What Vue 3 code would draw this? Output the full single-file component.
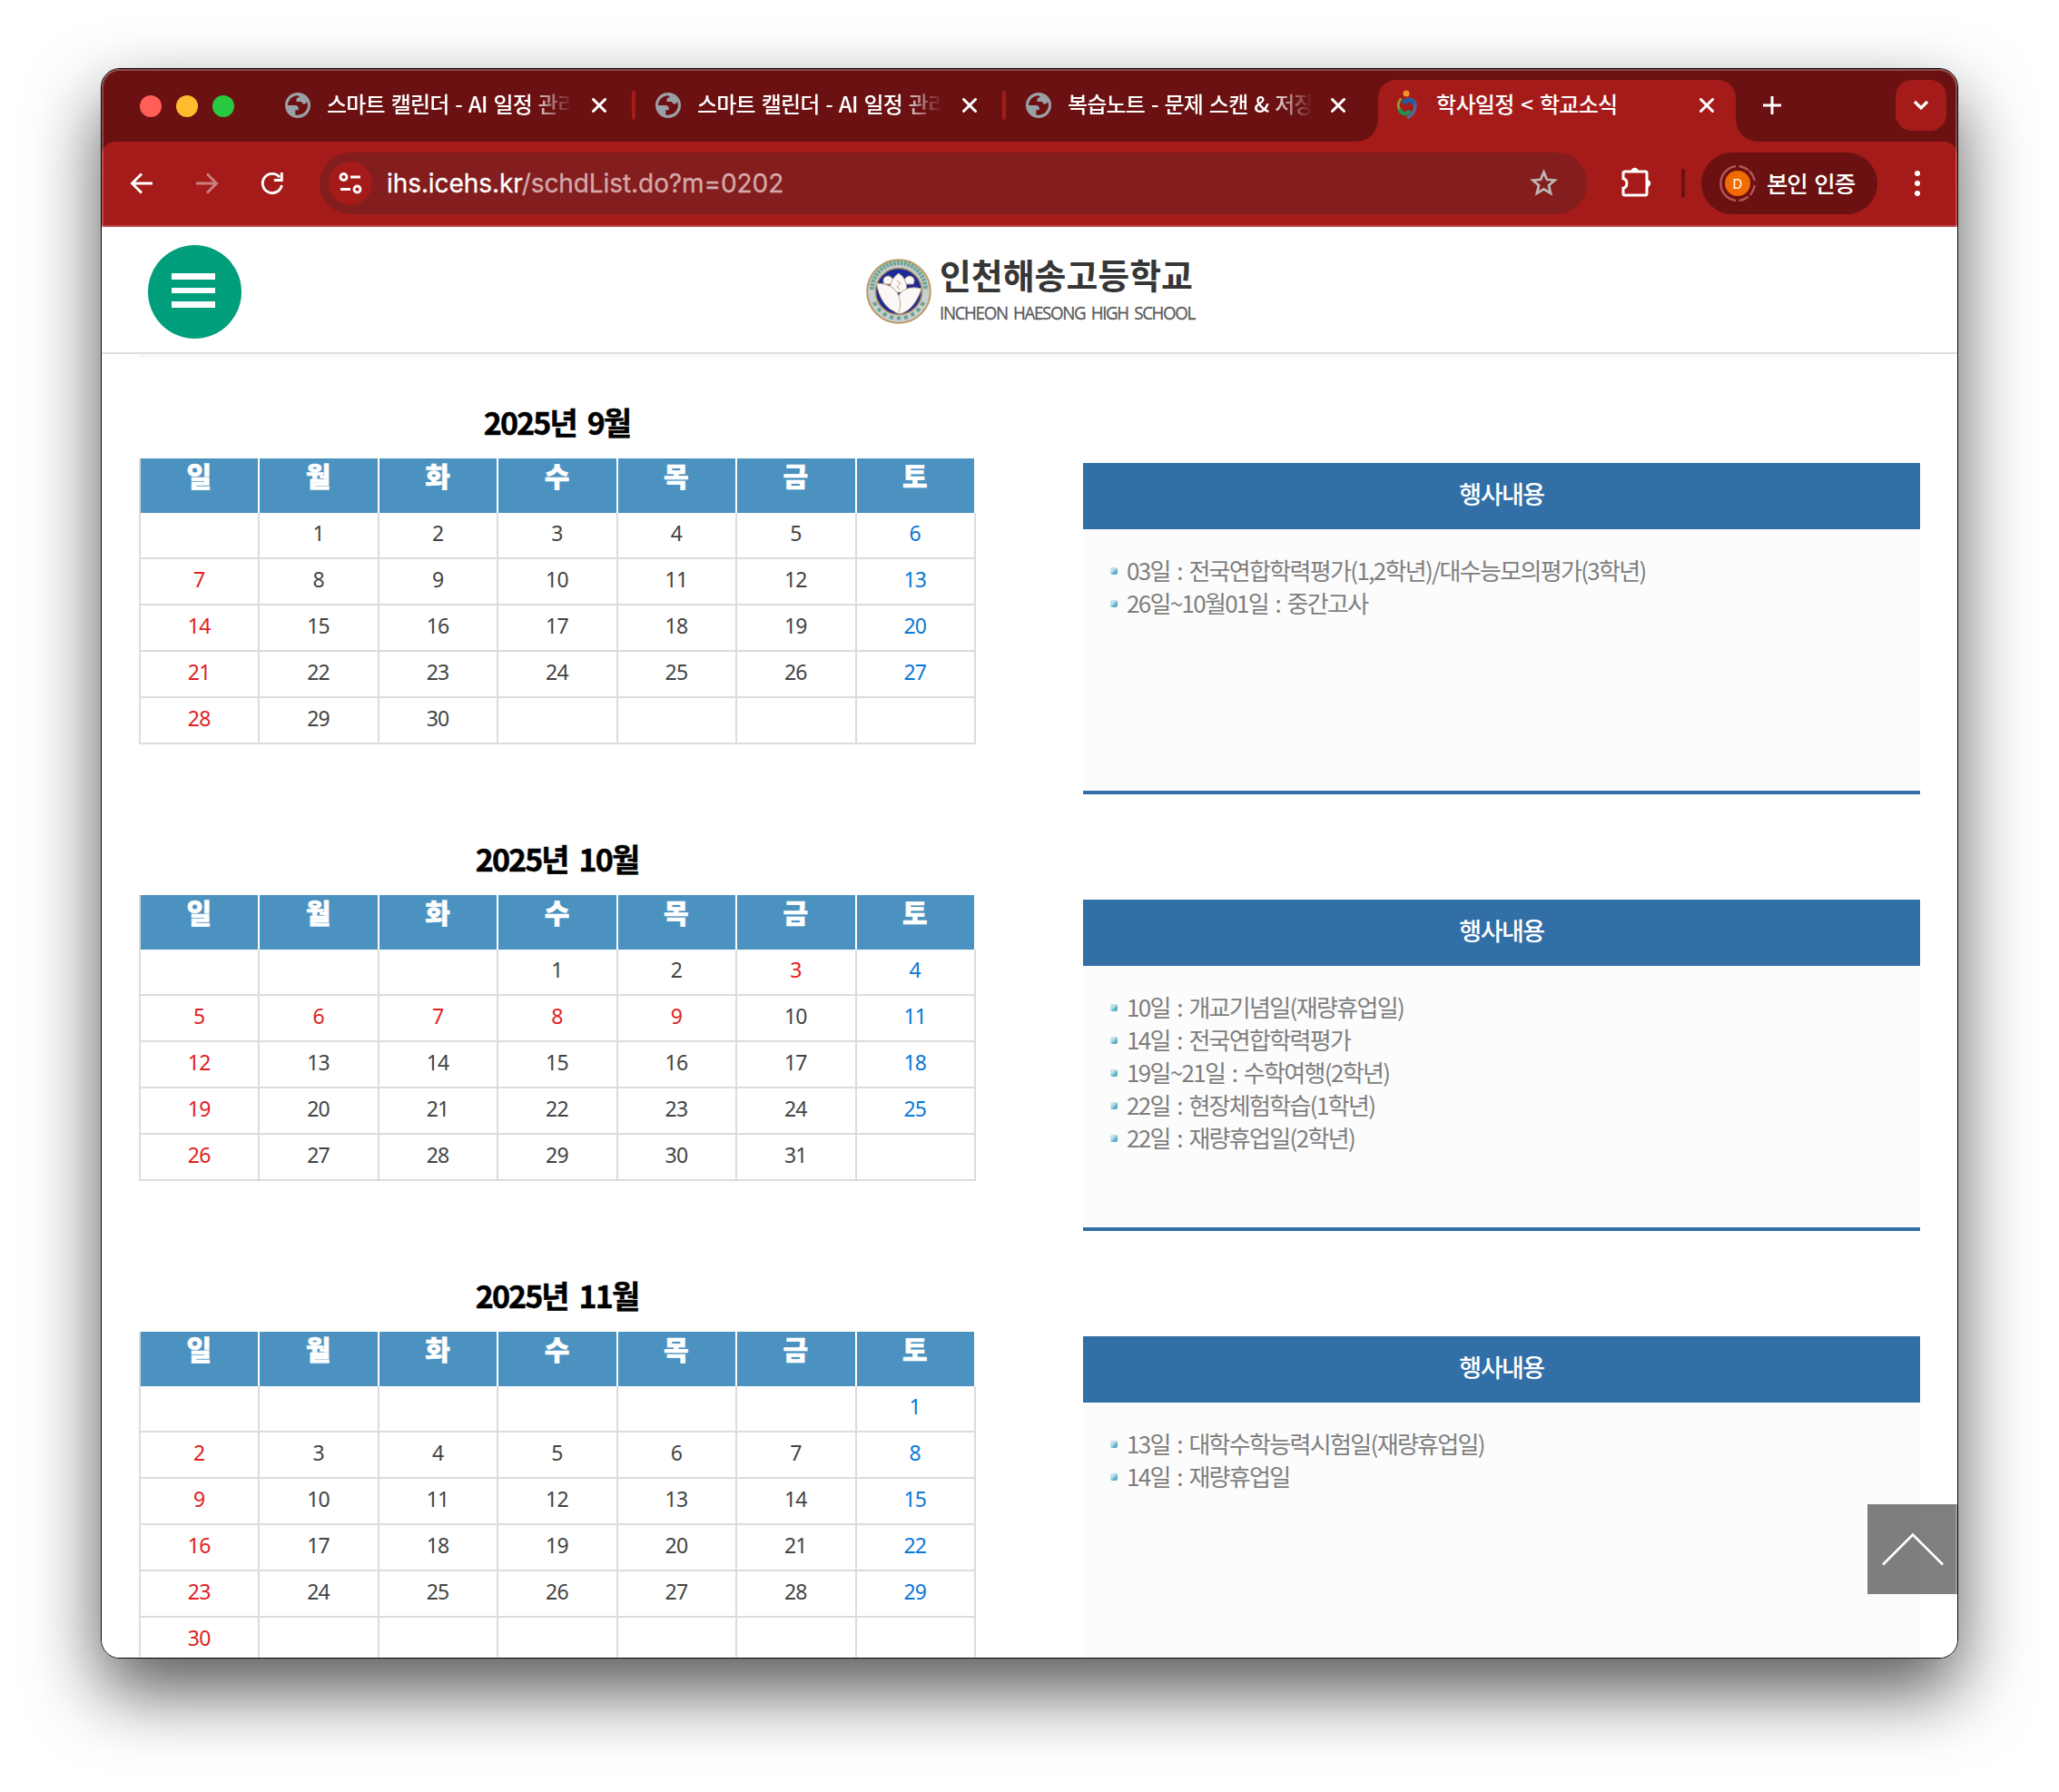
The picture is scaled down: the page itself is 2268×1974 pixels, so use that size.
<script setup>
const tabs = [
  { title: '스마트 캘린더 - AI 일정 관리' },
  { title: '스마트 캘린더 - AI 일정 관리' },
  { title: '복습노트 - 문제 스캔 & 저장' }
]

const dayNames = ['일', '월', '화', '수', '목', '금', '토']

function buildWeeks(firstDay, count, holidays = []) {
  const weeks = []
  const total = Math.ceil((firstDay + count) / 7)
  for (let w = 0; w < total; w++) {
    const row = []
    for (let d = 0; d < 7; d++) {
      const n = w * 7 + d - firstDay + 1
      const valid = n >= 1 && n <= count
      row.push({
        label: valid ? n : '',
        red: d === 0 || holidays.includes(n),
        blue: d === 6
      })
    }
    weeks.push(row)
  }
  return weeks
}

const months = [
  {
    title: '2025년 9월',
    weeks: buildWeeks(1, 30),
    events: ['03일 : 전국연합학력평가(1,2학년)/대수능모의평가(3학년)', '26일~10월01일 : 중간고사']
  },
  {
    title: '2025년 10월',
    weeks: buildWeeks(3, 31, [3, 6, 7, 8, 9]),
    events: [
      '10일 : 개교기념일(재량휴업일)',
      '14일 : 전국연합학력평가',
      '19일~21일 : 수학여행(2학년)',
      '22일 : 현장체험학습(1학년)',
      '22일 : 재량휴업일(2학년)'
    ]
  },
  {
    title: '2025년 11월',
    weeks: buildWeeks(6, 30),
    events: ['13일 : 대학수학능력시험일(재량휴업일)', '14일 : 재량휴업일']
  }
]
</script>

<template>
  <div class="desktop">
    <div class="window">
      <div class="tabstrip">
        <div class="lights"><i class="r"></i><i class="y"></i><i class="g"></i></div>
        <div v-for="(t, i) in tabs" :key="i" class="tab">
          <svg class="globe" viewBox="0 0 28 28">
            <circle cx="14" cy="14" r="14" fill="#9aa0a6" />
            <path d="M14 3.2C7.6 3.4 3 8.200 3 14h8.200c2.200 0 3.600 1.300 3.600 3.300v1.900h-3.500v5.200c6.800 1.500 13.600-3.400 13.600-10.400 0-1.500-.3-2.700-.8-3.900-.8 1.700-1.800 2.700-3.200 2.700-2.300 0-2.200-2.700-4-2.700h-4.300c-.6-3 .2-5 3.500-5.200z" fill="#6b1112" />
          </svg>
          <span class="tab-title fade">{{ t.title }}</span>
          <svg class="close" viewBox="0 0 16 16"><path d="M1.500 1.500l13 13M14.500 1.500l-13 13" /></svg>
          <b v-if="i < 2" class="sep"></b>
        </div>
        <div class="tab active">
          <svg class="favicon" viewBox="0 0 26 34">
            <circle cx="11" cy="4" r="3.500" fill="#f0922c" />
            <path d="M5.500 9.500C2 13 1.500 18 3.500 22" fill="none" stroke="#8f9d24" stroke-width="3" />
            <path d="M3.500 21c1.500 5.500 8 7 11.500 2" fill="none" stroke="#1f9150" stroke-width="4.500" />
            <path d="M8 13c5-4.500 13-3 13 4.500 0 6-3.500 10-9 13.500" fill="none" stroke="#5a6593" stroke-width="3.600" />
            <path d="M7.500 15c4-5 10-4.500 12 1" fill="none" stroke="#1b5fa8" stroke-width="4.500" />
          </svg>
          <span class="tab-title">학사일정 &lt; 학교소식</span>
          <svg class="close" viewBox="0 0 16 16"><path d="M1.500 1.500l13 13M14.500 1.500l-13 13" /></svg>
        </div>
        <svg class="plus" viewBox="0 0 20 20"><path d="M10 0v20M0 10h20" stroke="#fff" stroke-width="3" /></svg>
        <div class="tab-menu">
          <svg width="18" height="12" viewBox="0 0 18 12"><path d="M2 2l7 7 7-7" fill="none" stroke="#fff" stroke-width="3.200" /></svg>
        </div>
      </div>

      <div class="toolbar">
        <svg class="tool" viewBox="0 0 28 28"><path d="M26 14H4M14 3.500L3.500 14 14 24.500" /></svg>
        <svg class="tool dim" viewBox="0 0 28 28"><path d="M2 14h22M14 3.500L24.500 14 14 24.500" /></svg>
        <svg class="tool" viewBox="0 0 28 28"><path d="M24.300 16A10.600 10.600 0 1 1 22 7.200M24.300 2v8.500h-8.500" /></svg>
        <div class="omnibox">
          <div class="site">
            <svg width="26" height="24" viewBox="0 0 26 24" fill="none" stroke="#fff" stroke-width="2.800">
              <circle cx="5.500" cy="5" r="3.500" /><path d="M13 5h11M2 18.500h11" /><circle cx="20.500" cy="18.500" r="3.500" />
            </svg>
          </div>
          <span class="url">ihs.icehs.kr<em>/schdList.do?m=0202</em></span>
          <svg class="star" viewBox="0 0 30 30"><path d="M15 3.500l3.300 7.900 8.500.7-6.500 5.600 2 8.300-7.300-4.400L7.700 26l2-8.300-6.500-5.600 8.500-.7z" fill="none" stroke="#bdb5b5" stroke-width="2.700" /></svg>
        </div>
        <svg class="puzzle" viewBox="0 0 34 34">
          <path d="M4.500 6h23a1.500 1.500 0 0 1 1.500 1.500v23a1.500 1.500 0 0 1-1.500 1.500h-23a1.500 1.500 0 0 1-1.500-1.500v-6.300c5.200-1 5.200-9.400 0-10.400V7.500A1.500 1.500 0 0 1 4.500 6z" fill="none" stroke="#fff" stroke-width="3" />
          <path d="M11.500 6a4.200 4.200 0 0 1 8.400 0zM29 14.800a4.200 4.200 0 0 1 0 8.400z" fill="#fff" />
        </svg>
        <b class="bar"></b>
        <div class="profile">
          <svg width="40" height="42" viewBox="0 0 40 42">
            <circle cx="20" cy="21" r="14" fill="#f26b00" />
            <path d="M17 2.300A19 19 0 0 0 17 39.700" class="ring" />
            <path d="M22.500 2.200A19 19 0 0 1 31 5.700M33.500 8A19 19 0 0 1 38.500 17M38.500 24A19 19 0 0 1 34.500 33M31 36.300A19 19 0 0 1 22.500 39.800" class="ring" />
            <text x="20" y="26.500" text-anchor="middle" class="initial">D</text>
          </svg>
          <span>본인 인증</span>
        </div>
        <div class="dots"><i></i><i></i><i></i></div>
      </div>

      <div class="page">
        <header>
          <button class="menu"><i></i><i></i><i></i></button>
          <div class="logo">
            <svg class="emblem" viewBox="0 0 72 72">
              <circle cx="36" cy="36" r="34.800" fill="#c9ced0" stroke="#b99a62" stroke-width="2" />
              <path d="M6.500 34A29.500 29.500 0 0 1 65.500 34" fill="none" stroke="#6fa595" stroke-width="5" stroke-dasharray="3 1" />
              <path d="M9 48A29.500 29.500 0 0 0 63 48" fill="none" stroke="#65a394" stroke-width="4" stroke-dasharray="4 4" />
              <circle cx="36" cy="36" r="25.500" fill="#1c2a9a" stroke="#ab8c55" stroke-width="1.600" />
              <g fill="#faf9f8" stroke="#bfa184" stroke-width="1">
                <path d="M20 28c-3-6 1-9 5-9 3 1 6 4 6 9zM52 28c3-6-1-9-5-9-3 1-6 4-6 9z" />
                <path d="M27 37c-2-10 3-17 9-21 6 4 10 11 8 21z" />
                <path d="M11.500 27c10 0 21 4 24.500 14 3.500-8 14-11 25-8-3 10-10 22-19 26-3 2-8 2-11-1C21 54 14 42 11.500 27z" />
                <path d="M36 41c2 6 2 12 0 18M34 24l4 3-4 4 3 3" fill="none" />
              </g>
            </svg>
            <svg class="wordmark" width="284" height="76" viewBox="0 0 284 76">
              <text x="-1" y="33" textLength="279" lengthAdjust="spacingAndGlyphs" class="name-ko">인천해송고등학교</text>
              <text x="-1" y="67" textLength="281" lengthAdjust="spacingAndGlyphs" class="name-en">INCHEON HAESONG HIGH SCHOOL</text>
            </svg>
          </div>
        </header>
        <div class="strip"></div>
        <main>
          <section v-for="m in months" :key="m.title" class="month">
            <div class="calendar">
              <h2>{{ m.title }}</h2>
              <div class="grid">
                <div class="row head"><div v-for="d in dayNames" :key="d">{{ d }}</div></div>
                <div v-for="(w, i) in m.weeks" :key="i" class="row">
                  <div v-for="(c, j) in w" :key="j" :class="{ red: c.red, blue: c.blue }">{{ c.label }}</div>
                </div>
              </div>
            </div>
            <div class="events">
              <h3>행사내용</h3>
              <ul><li v-for="e in m.events" :key="e">{{ e }}</li></ul>
            </div>
          </section>
        </main>
        <div class="to-top">
          <svg width="68" height="36" viewBox="0 0 68 36"><path d="M1 34.500L34 1.500l33 33" fill="none" stroke="#fff" stroke-width="2.600" /></svg>
        </div>
      </div>
    </div>
  </div>
</template>

<style>
body { background: #fff; }
</style>

<style scoped>
* { box-sizing: border-box; }
.desktop {
  width: 2268px; height: 1974px; padding: 75px 111px 0; overflow: hidden; background: #fff;
  font-family: "Noto Sans CJK KR", "Noto Sans", sans-serif;
}
.window {
  position: relative; width: 2046px; height: 1752px; border: 1px solid #050505; border-radius: 21px;
  overflow: hidden; background: #fff; box-shadow: 0 36px 80px rgba(0, 0, 0, .66);
}
.window::after {
  content: ""; position: absolute; inset: 0; border-radius: 20px; pointer-events: none;
  box-shadow: inset 0 0 0 2px rgba(255, 255, 255, .24);
}
.tabstrip { height: 80px; background: #6b1112; display: flex; padding: 12px 12px 0 42px; color: #fff; }
.lights { display: flex; gap: 16px; width: 148px; padding-top: 17px; }
.lights i { width: 24px; height: 24px; border-radius: 50%; }
.r { background: #ff5f57; } .y { background: #febc2e; } .g { background: #28c840; }
.tab { position: relative; width: 408px; height: 56px; padding-left: 12px; display: flex; align-items: center; }
.globe { width: 28px; height: 28px; margin-right: 18px; flex: none; }
.tab-title { width: 268px; margin-top: -4px; font-size: 24px; line-height: 40px; font-weight: 500; letter-spacing: -.7px; word-spacing: 3px; white-space: nowrap; overflow: hidden; }
.fade { letter-spacing: -.8px; word-spacing: 2.200px; -webkit-mask-image: linear-gradient(90deg, #000 222px, transparent 270px); mask-image: linear-gradient(90deg, #000 222px, transparent 270px); }
.close { width: 16px; height: 16px; margin-left: 24px; flex: none; }
.tab:nth-child(4) .close { margin-left: 22px; }
.close path { stroke: #fff; stroke-width: 3; stroke-linecap: round; }
.sep { position: absolute; right: 10px; top: 12px; width: 4px; height: 32px; border-radius: 2px; background: #a51b1a; }
.tab.active { width: 394px; height: 68px; margin-left: -8px; padding: 0 0 12px 20px; background: #a51b1a; border-radius: 20px 20px 0 0; }
.tab.active::before, .tab.active::after { content: ""; position: absolute; bottom: 0; width: 24px; height: 24px; }
.tab.active::before { left: -24px; background: radial-gradient(circle at 0 0, transparent 23.500px, #a51b1a 24px); }
.tab.active::after { right: -24px; background: radial-gradient(circle at 100% 0, transparent 23.500px, #a51b1a 24px); }
.favicon { width: 26px; height: 34px; margin-right: 18px; flex: none; }
.tab.active .tab-title { width: 266px; }
.plus { width: 20px; height: 20px; margin: 18px 0 0 30px; }
.tab-menu { margin-left: auto; width: 56px; height: 56px; border-radius: 18px; background: #a51b1a; display: grid; place-items: center; }

.toolbar {
  height: 94px; background: #a51b1a; border-bottom: 2px solid #bb4b4b; display: flex; align-items: center;
  padding-left: 30px; position: relative;
}
.toolbar::before, .toolbar::after { content: ""; position: absolute; top: 0; width: 14px; height: 14px; }
.toolbar::before { left: 0; background: radial-gradient(circle at 100% 100%, transparent 13.500px, #6b1112 14px); }
.toolbar::after { right: 0; background: radial-gradient(circle at 0 100%, transparent 13.500px, #6b1112 14px); }
.tool { width: 28px; height: 28px; margin-right: 44px; flex: none; }
.tool path { fill: none; stroke: #fff; stroke-width: 2.900; }
.tool.dim path { stroke: #cd7f7f; }
.omnibox { width: 1396px; height: 68px; margin-left: -6px; border-radius: 34px; background: #831d1e; display: flex; align-items: center; padding: 0 32px 0 10px; }
.site { width: 48px; height: 48px; border-radius: 50%; background: #a51b1a; display: grid; place-items: center; }
.url { margin-left: 16px; flex: 1; color: #fff; font: 28px/40px Inter, Roboto, sans-serif; letter-spacing: -.08px; -webkit-text-stroke: .3px; }
.url em { font-style: normal; color: #d3a9a9; }
.star { width: 31px; height: 31px; margin-top: -2px; }
.puzzle { width: 34px; height: 34px; margin: -4px 0 0 37px; }
.bar { width: 4px; height: 32px; margin-left: 33px; border-radius: 2px; background: #6b1112; }
.profile { width: 194px; height: 68px; margin-left: 18px; padding-left: 20px; border-radius: 34px; background: #6b1112; display: flex; align-items: center; color: #fff; }
.profile span { margin: -3px 0 0 12px; font-size: 25.500px; line-height: 40px; font-weight: 500; letter-spacing: -1.100px; word-spacing: 3px; white-space: nowrap; }
.ring { fill: none; stroke: #b65550; stroke-width: 2.500; stroke-linecap: round; }
.initial { font: 15px Inter, sans-serif; fill: #fff; }
.dots { margin-left: 41px; display: flex; flex-direction: column; gap: 5px; }
.dots i { width: 6px; height: 6px; border-radius: 50%; background: #fff; }

.page { position: relative; height: 1576px; background: #fff; }
header { height: 140px; border-bottom: 2px solid #dedede; display: flex; }
.menu { width: 103px; height: 103px; margin: 20px 0 0 51px; padding: 31px 0 0 26px; border: 0; border-radius: 50%; background: #009e7a; display: flex; flex-direction: column; gap: 9px; }
.menu i { width: 48px; height: 6.700px; background: #fff; }
.logo { display: flex; margin: 35px 0 0 688px; }
.emblem { width: 72px; height: 72px; }
.wordmark { margin-left: 10px; overflow: visible; }
.name-ko { font: 700 38px "Noto Sans CJK KR", sans-serif; fill: #363636; }
.name-en { font: 19.500px "Open Sans", "Noto Sans", sans-serif; letter-spacing: -1.400px; word-spacing: 3px; fill: #5a5a5a; stroke: #5a5a5a; stroke-width: .3px; }
.strip { height: 4px; margin: 0 41px; background: #f8f8f8; }
main { height: 1432px; padding: 46px 41px 0; overflow: hidden; }
.month { height: 481px; display: flex; justify-content: space-between; }
.calendar, .events { width: 922px; }
h2 { margin: 0; height: 65px; padding-top: 1px; text-align: center; font-size: 34px; line-height: 48px; font-weight: 700; letter-spacing: -1.900px; word-spacing: 6px; text-indent: -1px; color: #000; -webkit-text-stroke: .5px #000; }
.grid { border-left: 2px solid #dcdcdc; }
.row { display: flex; height: 51px; }
.row div { flex: 1; padding-right: 1px; border-right: 2px solid #dcdcdc; border-bottom: 2px solid #dcdcdc; text-align: center; font: 23px/45px "Noto Sans", sans-serif; letter-spacing: -.8px; color: #444; }
.row .red { color: #e02222; }
.row .blue { color: #0a78d6; }
.row.head { height: 60px; }
.row.head div { border-right-color: #fff; border-bottom: 0; background: #4b92c1; background-clip: padding-box; color: #fff; font: 900 30px/37px "Noto Sans CJK KR", sans-serif; letter-spacing: 0; -webkit-text-stroke: .5px #fff; }
.events { height: 365px; margin-top: 70px; background: #fcfcfc; border-bottom: 4px solid #326fa6; }
h3 { margin: 0; height: 73px; background: #326fa6; color: #fff; text-align: center; font-size: 27px; line-height: 67px; font-weight: 500; letter-spacing: -1.500px; }
ul { margin: 0; padding: 27px 0 0 30px; list-style: none; }
li { display: flex; align-items: center; height: 36px; font-size: 26px; line-height: 36px; letter-spacing: -1.680px; word-spacing: 3.400px; color: #7e7e7e; white-space: nowrap; }
li::before { content: ""; width: 8px; height: 8px; margin: 2px 10px 0 0; border-radius: 2px; background: linear-gradient(135deg, #c4e3ea 35%, #59afc6 70%); }
.to-top { position: absolute; right: 0; bottom: 70px; width: 99px; height: 99px; padding-left: 16px; padding-top: 32px; background: rgba(0, 0, 0, .5); }
.to-top svg { display: block; }
</style>
